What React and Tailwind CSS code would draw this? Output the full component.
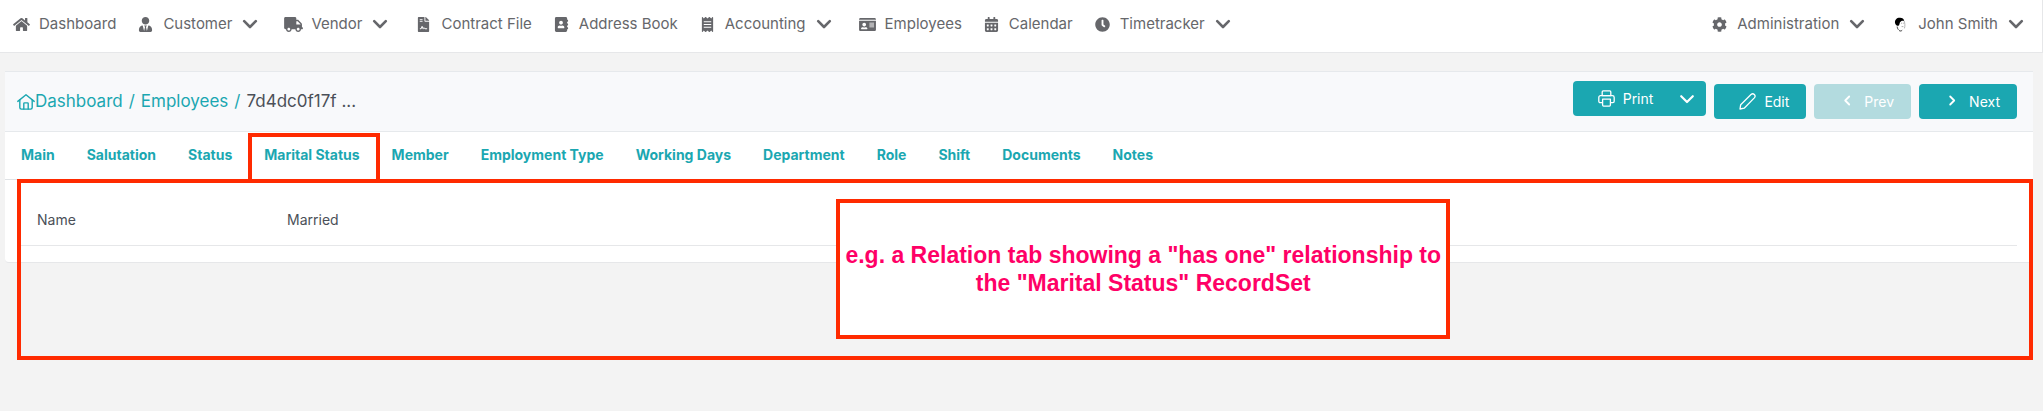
import {
  FaAddressBook,
  FaCalendarAlt,
  FaClock,
  FaCog,
  FaFileContract,
  FaHome,
  FaIdCard,
  FaReceipt,
  FaTruck,
  FaUserTie,
} from "react-icons/fa";

const mainMenu = [
  { label: "Dashboard", icon: FaHome },
  { label: "Customer", icon: FaUserTie, dropdown: true },
  { label: "Vendor", icon: FaTruck, dropdown: true },
  { label: "Contract File", icon: FaFileContract },
  { label: "Address Book", icon: FaAddressBook },
  { label: "Accounting", icon: FaReceipt, dropdown: true },
  { label: "Employees", icon: FaIdCard },
  { label: "Calendar", icon: FaCalendarAlt },
  { label: "Timetracker", icon: FaClock, dropdown: true },
];

const userMenu = [
  { label: "Administration", icon: FaCog, dropdown: true },
  { label: "John Smith", icon: Avatar, dropdown: true },
];

const tabs = [
  "Main",
  "Salutation",
  "Status",
  "Marital Status",
  "Member",
  "Employment Type",
  "Working Days",
  "Department",
  "Role",
  "Shift",
  "Documents",
  "Notes",
];

function Avatar({ className }) {
  return (
    <svg viewBox="0 0 15 15" className={className} aria-hidden="true">
      <path d="M2 6C1.6 2.6 4 .6 7 .8c2.4 0 3.8 1.2 4.2 3.2-1.8-.8-3.4-.2-4.2 1.2C6.4 6.6 6.6 8 5.4 8.8 4 8.8 2.4 8 2 6Z" fill="#000" />
      <path d="M11.2 4c.8 2.6 1 5 .2 7.4" fill="none" stroke="#b5b5b5" strokeWidth="1" />
      <path d="M8 6.2h1.2M10.2 6.2h.8M8.6 9.6h1.8" fill="none" stroke="#8a8a8a" strokeWidth=".7" />
      <path d="M4.2 9.6c.2 1.6.6 2.6 1.4 3.2M6 13.4c1 .8 2.2.8 3.2-.2" fill="none" stroke="#333" strokeWidth="1" />
    </svg>
  );
}

function LineIcon({ viewBox = "0 0 17 17", className = "size-[17px]", strokeWidth = 1.3, children }) {
  return (
    <svg
      viewBox={viewBox}
      fill="none"
      stroke="currentColor"
      strokeWidth={strokeWidth}
      strokeLinecap="round"
      strokeLinejoin="round"
      className={className}
      aria-hidden="true"
    >
      {children}
    </svg>
  );
}

function ChevronDown({ className, strokeWidth = 2.2 }) {
  return (
    <LineIcon viewBox="0 0 16 16" strokeWidth={strokeWidth} className={className}>
      <path d="m2.2 5.2 5.8 5.8 5.8-5.8" />
    </LineIcon>
  );
}

function ChevronSide({ left }) {
  return (
    <LineIcon strokeWidth={1.8}>
      <path d={left ? "m10.2 3.5-4 4 4 4" : "m6.2 3.5 4 4-4 4"} />
    </LineIcon>
  );
}

function HouseIcon() {
  return (
    <LineIcon viewBox="0 0 18 16" className="h-4 w-[18px]" strokeWidth={1.4}>
      <path d="M.8 7.4 9 .8l8.2 6.600" />
      <path d="M2.8 6v7.600c0 .9.6 1.500 1.500 1.500h9.400c.9 0 1.500-.6 1.500-1.500V6" />
      <path d="M6.8 15V9.600c0-.4.3-.7.7-.7h3c.4 0 .7.3.7.7V15" />
    </LineIcon>
  );
}

function PrinterIcon() {
  return (
    <LineIcon>
      <path d="M4.2 5.6V1.900c0-.6.4-1 1-1h6.600c.6 0 1 .4 1 1v3.700Z" />
      <path d="M4.4 12.600H2.200c-.8 0-1.400-.6-1.400-1.400V7.400c0-1 .8-1.800 1.800-1.800h11.800c1 0 1.800.8 1.800 1.800v3.800c0 .8-.6 1.400-1.400 1.400h-2.200" />
      <path d="M4.6 9.200h7.800v5.900c0 .6-.4 1-1 1H5.600c-.6 0-1-.4-1-1Z" />
    </LineIcon>
  );
}

function PencilIcon() {
  return (
    <LineIcon>
      <path d="M1 16l.7-4.300L12 1.500c1-.9 2.400-.9 3.300 0s.9 2.400 0 3.400L5.200 15.200Z" />
    </LineIcon>
  );
}

function MenuItem({ item }) {
  return (
    <li>
      <a href="#" className="flex items-center gap-2">
        <item.icon className="h-[15px] w-[19px]" />
        {item.label}
        {item.dropdown && <ChevronDown className="mr-1.5 ml-0.5 size-4" strokeWidth={2.6} />}
      </a>
    </li>
  );
}

function App() {
  return (
    <div className="min-h-screen bg-[#f3f3f3] font-['Inter',sans-serif] text-[#4b5058]">
      <nav className="flex h-[53px] items-center justify-between border-r border-b border-[#e6e7e9] bg-white px-3 pb-1 text-[15px] text-[#66676b]">
        <ul className="flex gap-5">
          {mainMenu.map((item) => (
            <MenuItem key={item.label} item={item} />
          ))}
        </ul>
        <ul className="flex gap-5">
          {userMenu.map((item) => (
            <MenuItem key={item.label} item={item} />
          ))}
        </ul>
      </nav>

      <main className="relative mt-[18px] mr-2.5 ml-[5px]">
        <section className="rounded-b border-b border-[#e6e7e9] bg-white">
          <header className="flex h-[61px] items-center justify-between border-y border-[#e6e9ec] bg-[#f8f9fb] pr-4 pl-3">
            <div className="flex items-center gap-1.5 text-[17px] text-[#1ba7b1]">
              <a href="#" className="flex items-center">
                <HouseIcon />
                Dashboard
              </a>
              <span>/</span>
              <a href="#">Employees</a>
              <span>/</span>
              <span className="text-[#4b5058]">7d4dc0f17f ...</span>
            </div>

            <div className="flex items-center gap-2 text-sm text-white">
              <div className="mb-1.5 flex h-[35px] rounded bg-[#1ba7b1]">
                <button type="button" className="flex items-center gap-2 pr-3.5 pl-[25px]">
                  <PrinterIcon />
                  Print
                </button>
                <button type="button" aria-label="More print options" className="pr-[11px] pl-3">
                  <ChevronDown className="size-4" />
                </button>
              </div>
              <button type="button" className="flex h-[35px] items-center gap-2 rounded bg-[#1ba7b1] pr-[17px] pl-[25px]">
                <PencilIcon />
                Edit
              </button>
              <button type="button" disabled className="flex h-[35px] items-center gap-2 rounded bg-[#b3dbdf] pr-[17px] pl-[25px]">
                <ChevronSide left />
                Prev
              </button>
              <button type="button" className="flex h-[35px] items-center gap-2 rounded bg-[#1ba7b1] pr-[17px] pl-[25px]">
                <ChevronSide />
                Next
              </button>
            </div>
          </header>

          <div className="flex h-12 border-b border-[#dfe2e5] text-sm font-bold text-[#1ba7b1]">
            {tabs.map((tab) => (
              <a key={tab} href="#" className="relative flex items-center px-4 pb-0.5">
                {tab}
                {tab === "Marital Status" && (
                  <span className="absolute top-px -right-1 -bottom-1 left-0 z-10 border-4 border-[#ff2a00]" />
                )}
              </a>
            ))}
          </div>

          <div className="p-4">
            <table className="w-full text-left text-sm">
              <tbody>
                <tr className="h-[49px] border-b border-[#e6e7e9]">
                  <th scope="row" className="w-[250px] px-4 font-normal">
                    Name
                  </th>
                  <td className="px-4">Married</td>
                </tr>
              </tbody>
            </table>
          </div>
        </section>

        <div className="absolute top-[108px] right-0 left-3 h-[181px] border-4 border-[#ff2a00]">
          <p className="absolute top-4 left-[40.6%] flex h-[140px] w-[614px] items-center border-4 border-[#ff2a00] bg-white text-center font-['Liberation_Sans',sans-serif] text-[23px] leading-7 font-bold text-[#ff0066]">
            e.g. a Relation tab showing a "has one" relationship to the "Marital Status" RecordSet
          </p>
        </div>
      </main>
    </div>
  );
}

export default App;
